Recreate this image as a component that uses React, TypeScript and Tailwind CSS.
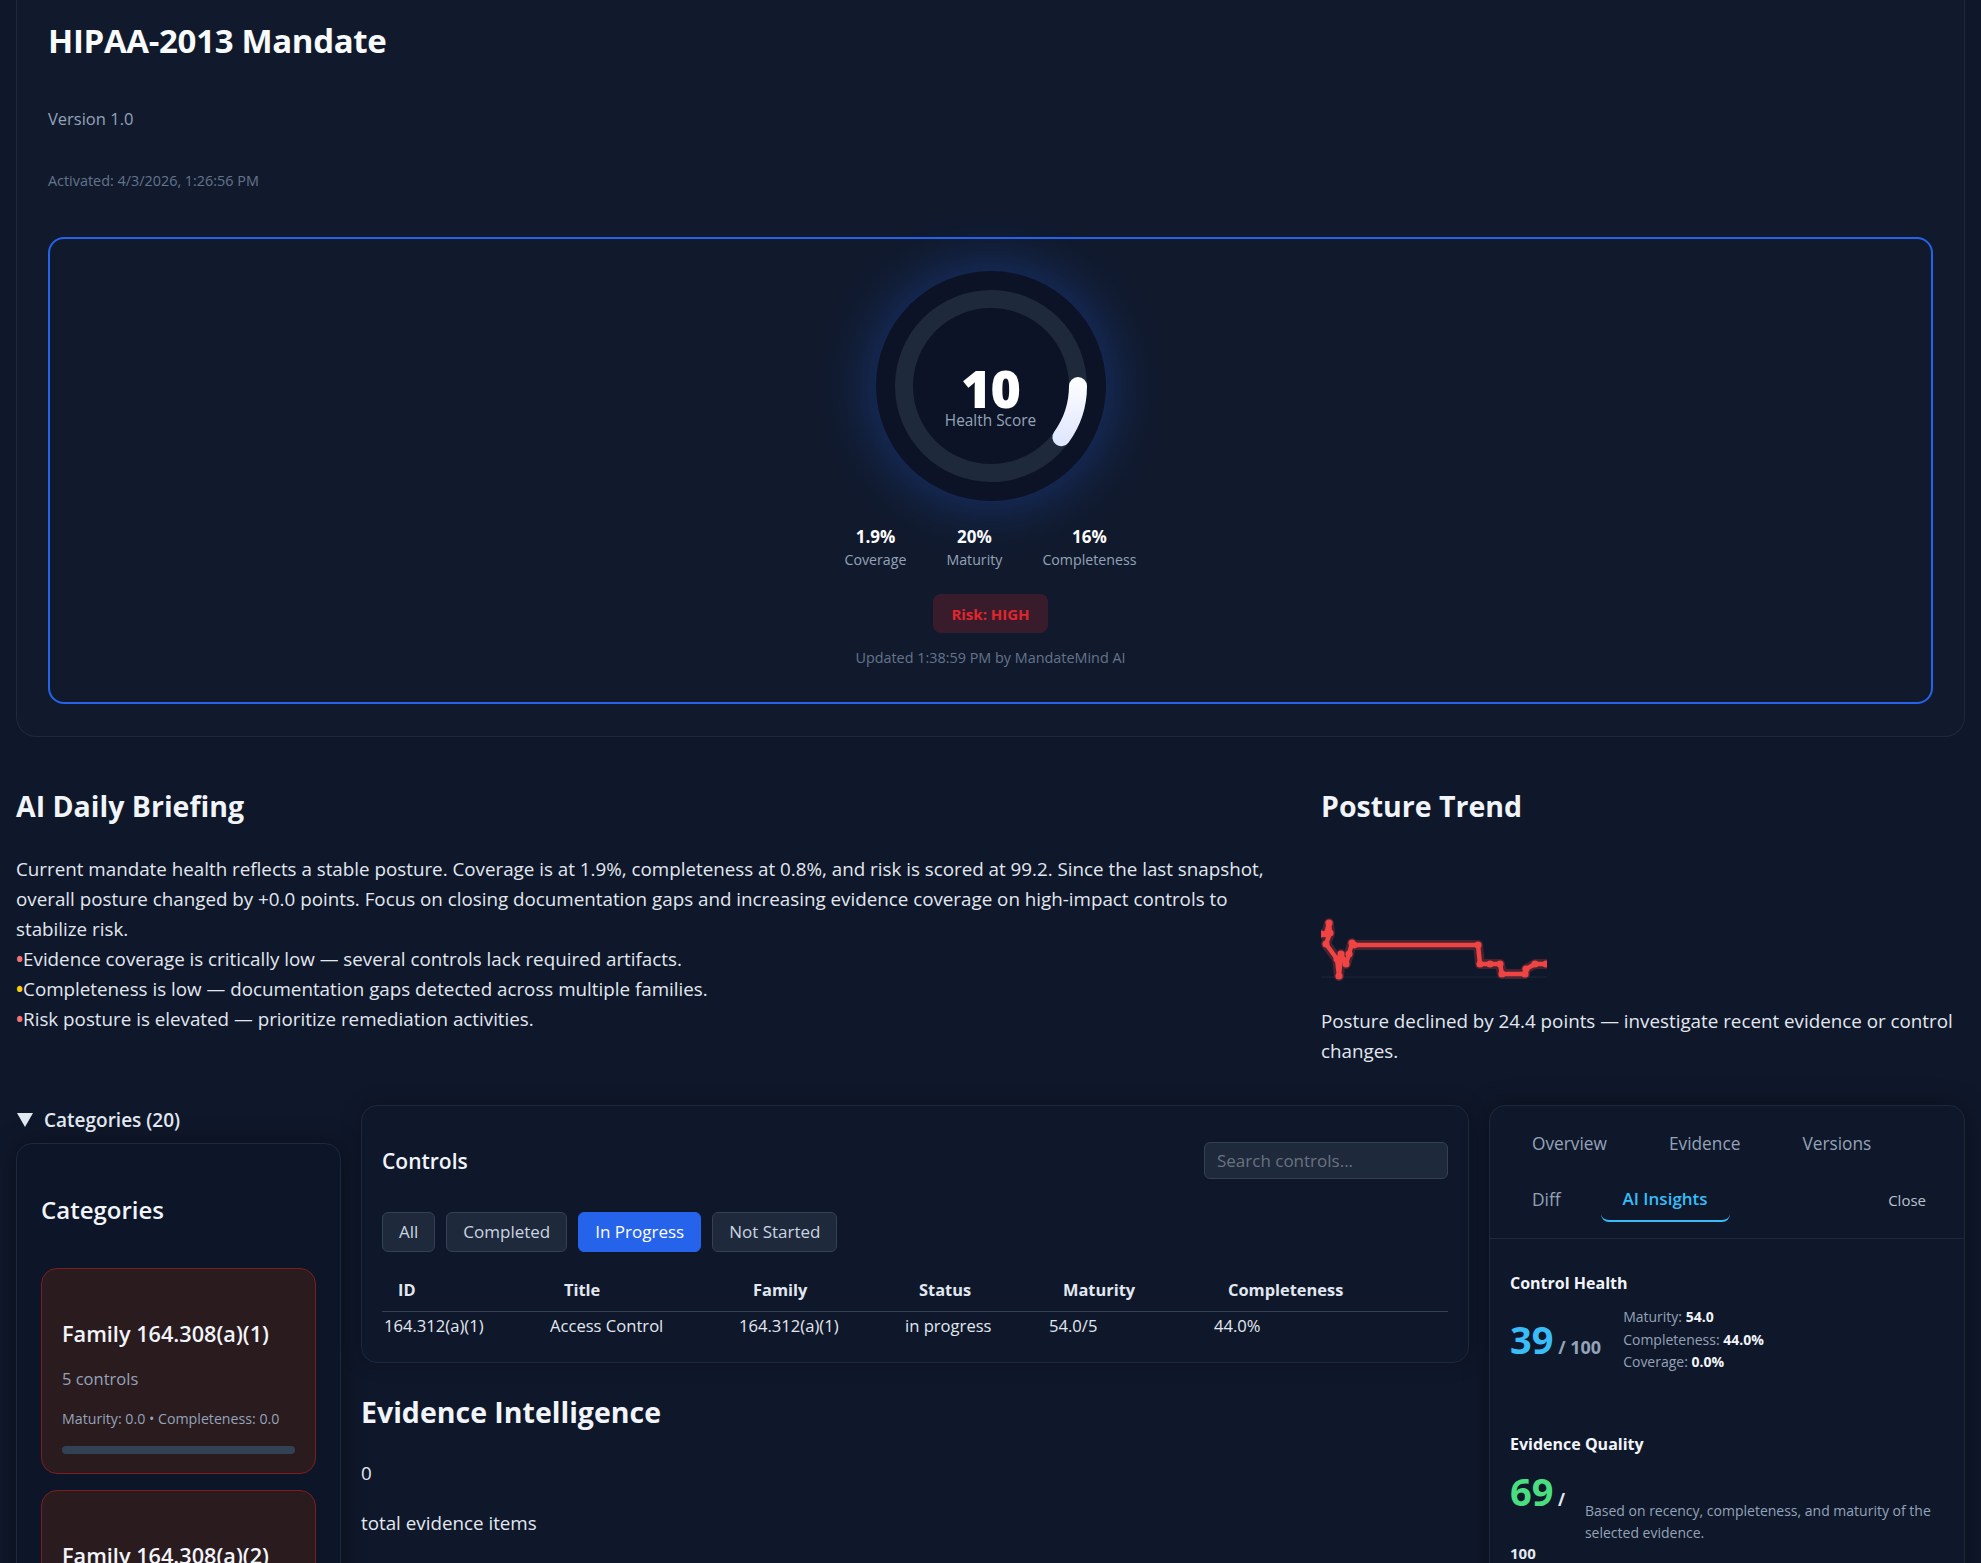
import React from "react";

function Gauge() {
  const r = 87;
  const c = 2 * Math.PI * r;
  return (
    <div className="relative h-[230px] w-[230px]">
      <div className="absolute inset-0 rounded-full bg-[#0c1326] shadow-[0_0_50px_8px_rgba(37,99,235,0.3)]" />
      <svg className="absolute inset-0" width="230" height="230" viewBox="0 0 230 230">
        <defs>
          <linearGradient id="arcGrad" gradientUnits="userSpaceOnUse" x1="0" y1="105" x2="0" y2="180">
            <stop offset="0" stopColor="#ffffff" />
            <stop offset="1" stopColor="#dbe4ff" />
          </linearGradient>
        </defs>
        <circle cx="115" cy="115" r={r} fill="none" stroke="#1e293b" strokeWidth="18" />
        <circle
          cx="115"
          cy="115"
          r={r}
          fill="none"
          stroke="url(#arcGrad)"
          strokeWidth="18"
          strokeLinecap="round"
          strokeDasharray={`${c * 0.1} ${c}`}
        />
      </svg>
      <div className="absolute inset-x-0 top-[97px] text-center text-[52px] font-extrabold leading-[40px] tracking-[-0.02em] text-white">10</div>
      <div className="absolute inset-x-0 top-[140px] text-center text-[15.4px] leading-5 text-[#94a3b8]">Health Score</div>
    </div>
  );
}

function Trend() {
  const pts: [number, number][] = [
    [0, 80], [5, 80], [8, 69], [9, 79], [5, 90], [16, 105], [18, 122], [20, 100], [25, 110], [28, 100], [31, 89],
    [33, 91], [157, 91], [159, 110], [169, 110], [179, 110], [181, 120], [204, 120], [205, 115], [214, 110], [225, 110],
  ];
  const d = pts.map((p) => p.join(",")).join(" ");
  return (
    <svg className="mt-[30px] block" width="226" height="128" viewBox="0 0 226 128">
      <line x1="0" y1="123" x2="226" y2="123" stroke="#1e293b" strokeWidth="1" />
      <polyline points={d} fill="none" stroke="#ef4444" strokeOpacity="0.25" strokeWidth="10" strokeLinejoin="round" strokeLinecap="round" />
      <polyline points={d} fill="none" stroke="#ef4444" strokeWidth="4.5" strokeLinejoin="round" strokeLinecap="round" />
      {pts.map(([x, y], i) => (
        <circle key={i} cx={x} cy={y} r="3.6" fill="#ef4444" />
      ))}
    </svg>
  );
}

function CategoryCard({ name }: { name: string }) {
  return (
    <div className="rounded-2xl border border-[#7f1d1d] bg-[#2a1b1f] px-5 pt-12 pb-[19px]">
      <h4 className="text-[21.7px] font-semibold leading-[33px] text-[#f1f5f9]">{name}</h4>
      <p className="mt-[17px] text-[16.5px] leading-6 text-[#94a3b8]">5 controls</p>
      <p className="mt-[18px] text-[14.2px] leading-5 text-[#94a3b8]">Maturity: 0.0 • Completeness: 0.0</p>
      <div className="mt-[17px] h-2 rounded-full bg-[#334155]" />
    </div>
  );
}

export default function App() {
  const stats = [
    ["1.9%", "Coverage"],
    ["20%", "Maturity"],
    ["16%", "Completeness"],
  ];
  const filters = ["All", "Completed", "In Progress", "Not Started"];
  const headers = ["ID", "Title", "Family", "Status", "Maturity", "Completeness"];
  const row = ["164.312(a)(1)", "Access Control", "164.312(a)(1)", "in progress", "54.0/5", "44.0%"];
  const widths = ["w-[166px]", "w-[189px]", "w-[166px]", "w-[144px]", "w-[165px]", ""];
  return (
    <div className="min-h-screen overflow-hidden bg-[#0f172a] px-4 pb-10 font-['Open_Sans',sans-serif] text-[#e2e8f0]">
      {/* Header card */}
      <section className="rounded-b-[20px] border-x border-b border-[#1e293b] bg-[#111a2d] px-[31px] pt-[19px] pb-8">
        <h1 className="text-[33px] font-bold leading-[43px] tracking-[-0.01em] text-[#f8fafc]">HIPAA-2013 Mandate</h1>
        <p className="mt-[43px] text-[16.5px] leading-[27px] text-[#94a3b8]">Version 1.0</p>
        <p className="mt-[39px] text-[14.4px] leading-5 text-[#64748b]">Activated: 4/3/2026, 1:26:56 PM</p>
        <div className="mt-[46px] flex flex-col items-center rounded-2xl border-2 border-[#2563eb] pt-8 pb-[34px]">
          <Gauge />
          <div className="mt-[23px] flex gap-10">
            {stats.map(([v, l]) => (
              <div key={l} className="flex flex-col items-center">
                <span className="text-[17px] font-bold leading-[25px] text-white">{v}</span>
                <span className="text-[14.2px] leading-[22px] text-[#94a3b8]">{l}</span>
              </div>
            ))}
          </div>
          <div className="mt-[23px] rounded-lg bg-[#dc2626]/20 px-[18px] py-[7.5px] text-[15px] font-bold leading-6 text-[#e0262c]">
            Risk: HIGH
          </div>
          <p className="mt-[15px] text-[14.4px] leading-5 text-[#64748b]">Updated 1:38:59 PM by MandateMind AI</p>
        </div>
      </section>

      {/* Briefing + trend */}
      <section className="mt-[51px] grid grid-cols-[1fr_644px] gap-6">
        <div>
          <h2 className="text-[28.5px] font-bold leading-9 text-[#f1f5f9]">AI Daily Briefing</h2>
          <p className="mt-[30px] text-[18.8px] leading-[30px] text-[#e2e8f0]">
            Current mandate health reflects a stable posture. Coverage is at 1.9%, completeness at 0.8%, and risk is scored at 99.2. Since the last snapshot, overall posture changed by +0.0 points. Focus on closing documentation gaps and increasing evidence coverage on high-impact controls to stabilize risk.
          </p>
          <ul className="text-[18.8px] leading-[30px] text-[#e2e8f0]">
            <li>
              <span className="font-bold text-[#f87171]">•</span>Evidence coverage is critically low — several controls lack required artifacts.
            </li>
            <li>
              <span className="font-bold text-[#facc15]">•</span>Completeness is low — documentation gaps detected across multiple families.
            </li>
            <li>
              <span className="font-bold text-[#f87171]">•</span>Risk posture is elevated — prioritize remediation activities.
            </li>
          </ul>
        </div>
        <div>
          <h2 className="text-[28.5px] font-bold leading-9 text-[#f1f5f9]">Posture Trend</h2>
          <Trend />
          <p className="mt-6 text-[18.8px] leading-[30px] text-[#e2e8f0]">
            Posture declined by 24.4 points — investigate recent evidence or control changes.
          </p>
        </div>
      </section>

      {/* Main row */}
      <section className="mt-[39px] grid grid-cols-[325px_1fr_476px] items-start gap-5">
        {/* Categories */}
        <div>
          <div className="flex h-[30px] items-center gap-[11px] text-[19px] font-semibold text-[#e2e8f0]">
            <svg width="16" height="14" viewBox="0 0 16 14" className="ml-[1px]">
              <polygon points="0,0 16,0 8,14" fill="#e2e8f0" />
            </svg>
            Categories (20)
          </div>
          <div className="mt-[8px] rounded-2xl border border-[#1e293b] bg-[#0d1528] px-6 pt-[50px] pb-6 shadow-[0_0_24px_rgba(0,0,0,0.35)]">
            <h3 className="text-[24px] font-semibold leading-8 text-[#f1f5f9]">Categories</h3>
            <div className="mt-[42px] flex flex-col gap-4">
              <CategoryCard name="Family 164.308(a)(1)" />
              <CategoryCard name="Family 164.308(a)(2)" />
            </div>
          </div>
        </div>

        {/* Controls */}
        <div>
          <div className="rounded-2xl border border-[#1e293b] bg-[#0f172a] px-5 pt-9 pb-4 shadow-[0_0_20px_rgba(0,0,0,0.25)]">
            <div className="flex items-center justify-between">
              <h3 className="text-[21px] font-semibold leading-7 text-[#f1f5f9]">Controls</h3>
              <input
                placeholder="Search controls..."
                className="h-[37px] w-[244px] rounded-md border border-[#334155] bg-[#1e293b] px-3 text-[17px] text-[#e2e8f0] outline-none placeholder:text-[#6b7280]"
              />
            </div>
            <div className="mt-[33px] flex gap-[11px]">
              {filters.map((f) =>
                f === "In Progress" ? (
                  <button key={f} className="flex h-10 items-center rounded-md border border-[#2563eb] bg-[#2563eb] px-4 text-[17px] text-white">
                    {f}
                  </button>
                ) : (
                  <button key={f} className="flex h-10 items-center rounded-md border border-[#334155] bg-[#1e293b] px-4 text-[17px] text-[#cbd5e1]">
                    {f}
                  </button>
                )
              )}
            </div>
            <table className="mt-[18px] w-full table-fixed border-collapse">
              <thead>
                <tr>
                  {headers.map((h, i) => (
                    <th key={h} className={`${widths[i]} h-[41px] border-b border-[#334155] pl-4 text-left text-[16.4px] font-bold text-[#e2e8f0]`}>
                      {h}
                    </th>
                  ))}
                </tr>
              </thead>
              <tbody>
                <tr>
                  {row.map((c, i) => (
                    <td key={i} className="pt-[2px] pb-[8px] pl-[2px] text-[16.6px] leading-6 text-[#e2e8f0]">
                      {c}
                    </td>
                  ))}
                </tr>
              </tbody>
            </table>
          </div>
          <h2 className="mt-[31px] text-[28.5px] font-bold leading-9 text-[#f1f5f9]">Evidence Intelligence</h2>
          <p className="mt-[30px] text-[18.8px] leading-[27px]">0</p>
          <p className="mt-[23px] text-[18.8px] leading-[27px]">total evidence items</p>
        </div>

        {/* Detail drawer */}
        <div className="rounded-2xl border border-[#1e293b] bg-[#0f172a] shadow-[0_0_24px_rgba(0,0,0,0.35)]">
          <div className="flex flex-wrap items-center gap-x-[18px] gap-y-3 border-b border-[#1e293b] px-5 py-4">
            {["Overview", "Evidence", "Versions", "Diff"].map((t) => (
              <button key={t} className="h-11 px-[22px] text-[17.3px] text-[#94a3b8]">
                {t}
              </button>
            ))}
            <button className="h-11 rounded-lg border-b-2 border-[#38bdf8] px-[22px] text-[17px] font-semibold text-[#38bdf8]">
              AI Insights
            </button>
            <button className="ml-auto h-11 px-[18px] text-[15px] text-[#b8c2cf]">Close</button>
          </div>
          <div className="px-5 pt-8 pb-12">
            <h4 className="text-[16px] font-bold leading-[25px] text-[#f1f5f9]">Control Health</h4>
            <div className="mt-[10px] flex items-center gap-[22px]">
              <div className="whitespace-nowrap">
                <span className="text-[38px] font-bold text-[#38bdf8]">39</span>
                <span className="text-[18px] font-bold text-[#94a3b8]"> / 100</span>
              </div>
              <div className="text-[14px] leading-[22.5px] text-[#94a3b8]">
                <div>
                  Maturity: <b className="text-[#f1f5f9]">54.0</b>
                </div>
                <div>
                  Completeness: <b className="text-[#f1f5f9]">44.0%</b>
                </div>
                <div>
                  Coverage: <b className="text-[#f1f5f9]">0.0%</b>
                </div>
              </div>
            </div>
            <h4 className="mt-[58px] text-[16px] font-bold leading-[25px] text-[#f1f5f9]">Evidence Quality</h4>
            <div className="mt-2 flex items-center gap-5">
              <div className="shrink-0 leading-[53px]">
                <div className="whitespace-nowrap">
                  <span className="text-[38px] font-bold text-[#4ade80]">69</span>
                  <span className="text-[17px] font-bold text-[#e2e8f0]"> /</span>
                </div>
                <div className="text-[15px] font-bold text-[#e2e8f0]">100</div>
              </div>
              <p className="text-[14px] leading-[22.5px] text-[#94a3b8]">
                Based on recency, completeness, and maturity of the selected evidence.
              </p>
            </div>
          </div>
        </div>
      </section>
    </div>
  );
}
